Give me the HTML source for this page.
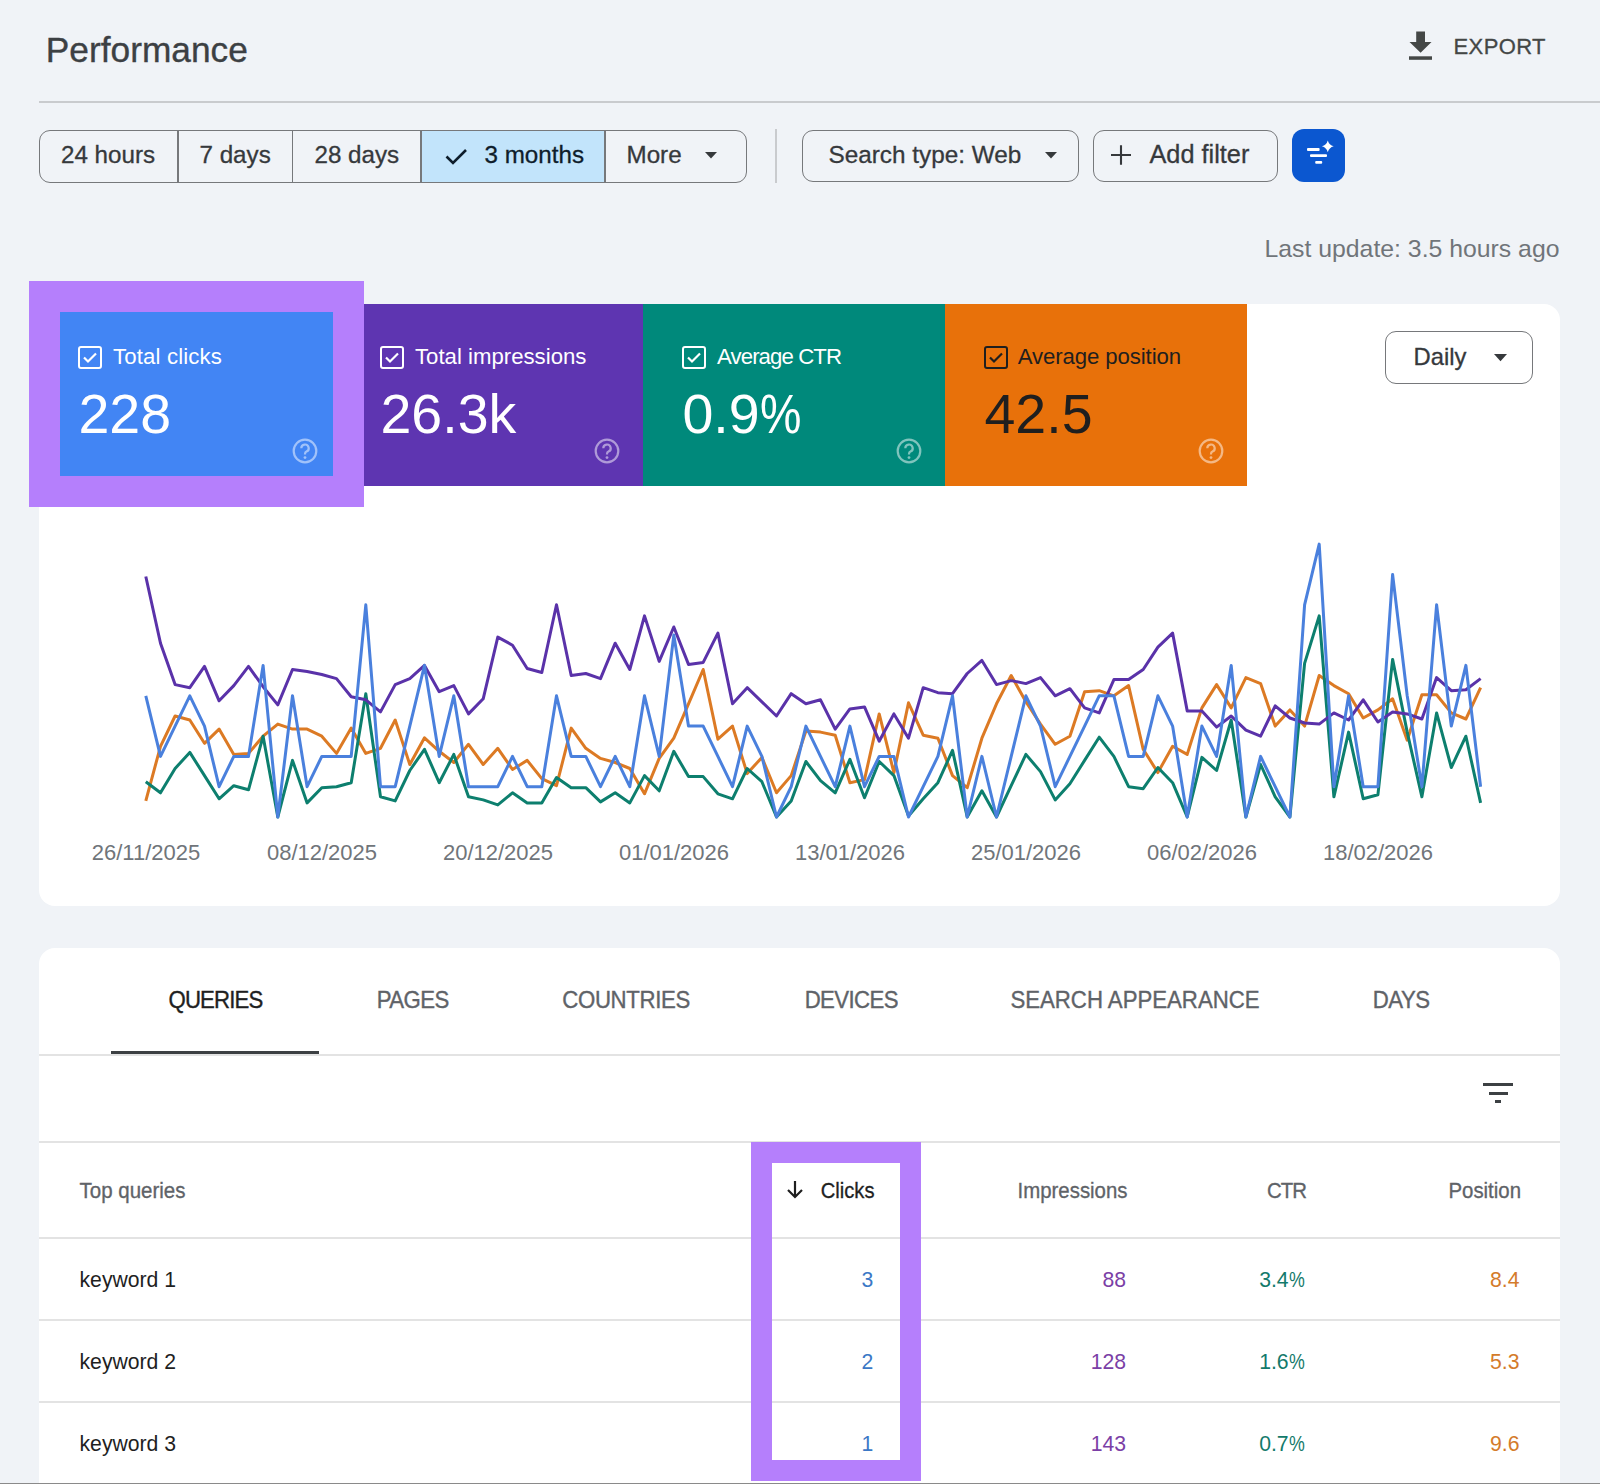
<!DOCTYPE html><html><head><meta charset="utf-8"><title>Performance</title><style>
*{box-sizing:border-box;margin:0;padding:0}
html,body{width:1600px;height:1484px;overflow:hidden}
body{background:#f0f3f7;font-family:"Liberation Sans",sans-serif;position:relative}
.t{position:absolute;line-height:1;white-space:nowrap}
.pc{display:inline-block;transform:scaleX(0.84);transform-origin:0 0}
</style></head><body>
<div class="t" style="left:45.80px;top:32.32px;font-size:35.3px;color:#3c4043;font-weight:400;-webkit-text-stroke:0.35px #3c4043;">Performance</div>
<svg style="position:absolute;left:1405px;top:28px" width="32" height="36" viewBox="0 0 32 36"><path d="M11.2 3.5h8.8v10.4h6.5L15.6 24.8 4.5 13.9h6.7z" fill="#444746"/><rect x="4" y="28.3" width="23" height="3.5" fill="#444746"/></svg>
<div class="t" style="left:1453.50px;top:36.38px;font-size:22px;color:#444746;font-weight:400;letter-spacing:0.4px;-webkit-text-stroke:0.3px #444746;">EXPORT</div>
<div style="position:absolute;left:39px;top:101px;width:1561px;height:2px;background:#c9cbce"></div>
<div style="position:absolute;left:39px;top:129.5px;width:708px;height:53px;border:1.75px solid #76787b;border-radius:11px;overflow:hidden"><div style="position:absolute;left:380.5px;top:0;width:184px;height:100%;background:#c2e4fb"></div></div>
<div style="position:absolute;left:177.25px;top:129.5px;width:1.5px;height:53.0px;background:#76787b"></div>
<div style="position:absolute;left:291.75px;top:129.5px;width:1.5px;height:53.0px;background:#76787b"></div>
<div style="position:absolute;left:420.25px;top:129.5px;width:1.5px;height:53.0px;background:#76787b"></div>
<div style="position:absolute;left:604.25px;top:129.5px;width:1.5px;height:53.0px;background:#76787b"></div>
<div class="t" style="left:61.00px;top:142.91px;font-size:24.2px;color:#36393c;font-weight:400;-webkit-text-stroke:0.3px #36393c;">24 hours</div>
<div class="t" style="left:199.50px;top:142.91px;font-size:24.2px;color:#36393c;font-weight:400;-webkit-text-stroke:0.3px #36393c;">7 days</div>
<div class="t" style="left:314.50px;top:142.91px;font-size:24.2px;color:#36393c;font-weight:400;-webkit-text-stroke:0.3px #36393c;">28 days</div>
<svg style="position:absolute;left:443px;top:145px" width="26" height="22" viewBox="0 0 26 22"><path d="M3.5 11.5l6.5 6.5L23 5" fill="none" stroke="#0e1d2b" stroke-width="2.6"/></svg>
<div class="t" style="left:484.50px;top:142.91px;font-size:24.2px;color:#0e1d2b;font-weight:400;-webkit-text-stroke:0.3px #0e1d2b;">3 months</div>
<div class="t" style="left:626.50px;top:142.91px;font-size:24.2px;color:#36393c;font-weight:400;-webkit-text-stroke:0.3px #36393c;">More</div>
<svg style="position:absolute;left:704.8px;top:152.3px" width="12" height="7" viewBox="0 0 12 7"><path d="M0 0h12L6 6.6z" fill="#36393c"/></svg>
<div style="position:absolute;left:775px;top:129px;width:2px;height:54px;background:#c9cbce"></div>
<div style="position:absolute;left:801.5px;top:129.5px;width:277.5px;height:52.5px;border:1.75px solid #76787b;border-radius:11px"></div>
<div class="t" style="left:828.50px;top:142.83px;font-size:24.3px;color:#36393c;font-weight:400;-webkit-text-stroke:0.3px #36393c;">Search type: Web</div>
<svg style="position:absolute;left:1044.8px;top:152.3px" width="12" height="7" viewBox="0 0 12 7"><path d="M0 0h12L6 6.6z" fill="#36393c"/></svg>
<div style="position:absolute;left:1092.5px;top:129.5px;width:185px;height:52.5px;border:1.75px solid #76787b;border-radius:11px"></div>
<svg style="position:absolute;left:1108.75px;top:143.2px" width="24" height="24" viewBox="0 0 24 24"><path d="M12 2.2v19.6M2 12h20" stroke="#36393c" stroke-width="2.1"/></svg>
<div class="t" style="left:1149.50px;top:141.98px;font-size:25.3px;color:#36393c;font-weight:400;-webkit-text-stroke:0.3px #36393c;">Add filter</div>
<div style="position:absolute;left:1292px;top:129px;width:53px;height:53px;background:#0b57d0;border-radius:12px"></div>
<svg style="position:absolute;left:1292px;top:129px" width="53" height="53" viewBox="1292 129 53 53"><rect x="1307" y="148" width="12.6" height="2.9" rx="1" fill="#fff"/><rect x="1310" y="154.2" width="17" height="2.8" rx="1" fill="#fff"/><rect x="1315.2" y="161" width="7" height="2.8" rx="1" fill="#fff"/><path d="M1327.8 140.4 Q1329.1 145 1333.7 146.3 Q1329.1 147.6 1327.8 152.2 Q1326.5 147.6 1321.9 146.3 Q1326.5 145 1327.8 140.4z" fill="#fff"/></svg>
<div class="t" style="right:40.50px;text-align:right;top:236.71px;font-size:24.8px;color:#70757a;font-weight:400;">Last update: 3.5 hours ago</div>
<div style="position:absolute;left:39px;top:304px;width:1521px;height:602px;background:#fff;border-radius:16px"></div>
<div style="position:absolute;left:39px;top:304px;width:302px;height:182px;background:#4285f4;border-top-left-radius:16px;"></div>
<div style="position:absolute;left:78px;top:346px;width:23.5px;height:23px;border:2px solid #fff;border-radius:3px"></div>
<svg style="position:absolute;left:78px;top:346px" width="24" height="23" viewBox="0 0 24 23"><path d="M6 11.5l4 4L18 7.5" fill="none" stroke="#fff" stroke-width="2.2"/></svg>
<div class="t" style="left:113.00px;top:345.51px;font-size:22.2px;color:#fff;font-weight:400;letter-spacing:0.15px;">Total clicks</div>
<div class="t" style="left:78.50px;top:386.82px;font-size:55.5px;color:#fff;font-weight:400;">228</div>
<svg style="position:absolute;left:291.2px;top:437px" width="28" height="28" viewBox="0 0 28 28"><circle cx="14" cy="14" r="11.3" fill="none" stroke="#fff" stroke-opacity="0.5" stroke-width="2.2"/><path d="M10.3 11.2a3.7 3.7 0 1 1 5.2 3.4c-1 .5-1.5 1.2-1.5 2.3v.6" fill="none" stroke="#fff" stroke-opacity="0.5" stroke-width="2.2"/><circle cx="14" cy="20.6" r="1.4" fill="#fff" fill-opacity="0.5"/></svg>
<div style="position:absolute;left:341px;top:304px;width:302px;height:182px;background:#5e35b1;"></div>
<div style="position:absolute;left:380px;top:346px;width:23.5px;height:23px;border:2px solid #fff;border-radius:3px"></div>
<svg style="position:absolute;left:380px;top:346px" width="24" height="23" viewBox="0 0 24 23"><path d="M6 11.5l4 4L18 7.5" fill="none" stroke="#fff" stroke-width="2.2"/></svg>
<div class="t" style="left:415.00px;top:345.51px;font-size:22.2px;color:#fff;font-weight:400;letter-spacing:0px;">Total impressions</div>
<div class="t" style="left:380.50px;top:386.82px;font-size:55.5px;color:#fff;font-weight:400;">26.3k</div>
<svg style="position:absolute;left:593.2px;top:437px" width="28" height="28" viewBox="0 0 28 28"><circle cx="14" cy="14" r="11.3" fill="none" stroke="#fff" stroke-opacity="0.5" stroke-width="2.2"/><path d="M10.3 11.2a3.7 3.7 0 1 1 5.2 3.4c-1 .5-1.5 1.2-1.5 2.3v.6" fill="none" stroke="#fff" stroke-opacity="0.5" stroke-width="2.2"/><circle cx="14" cy="20.6" r="1.4" fill="#fff" fill-opacity="0.5"/></svg>
<div style="position:absolute;left:643px;top:304px;width:302px;height:182px;background:#00897b;"></div>
<div style="position:absolute;left:682px;top:346px;width:23.5px;height:23px;border:2px solid #fff;border-radius:3px"></div>
<svg style="position:absolute;left:682px;top:346px" width="24" height="23" viewBox="0 0 24 23"><path d="M6 11.5l4 4L18 7.5" fill="none" stroke="#fff" stroke-width="2.2"/></svg>
<div class="t" style="left:717.00px;top:345.51px;font-size:22.2px;color:#fff;font-weight:400;letter-spacing:-0.9px;">Average CTR</div>
<div class="t" style="left:682.50px;top:386.82px;font-size:55.5px;color:#fff;font-weight:400;">0.9<span class=pc>%</span></div>
<svg style="position:absolute;left:895.2px;top:437px" width="28" height="28" viewBox="0 0 28 28"><circle cx="14" cy="14" r="11.3" fill="none" stroke="#fff" stroke-opacity="0.5" stroke-width="2.2"/><path d="M10.3 11.2a3.7 3.7 0 1 1 5.2 3.4c-1 .5-1.5 1.2-1.5 2.3v.6" fill="none" stroke="#fff" stroke-opacity="0.5" stroke-width="2.2"/><circle cx="14" cy="20.6" r="1.4" fill="#fff" fill-opacity="0.5"/></svg>
<div style="position:absolute;left:945px;top:304px;width:302px;height:182px;background:#e8710a;"></div>
<div style="position:absolute;left:984px;top:346px;width:23.5px;height:23px;border:2px solid #1f1f1f;border-radius:3px"></div>
<svg style="position:absolute;left:984px;top:346px" width="24" height="23" viewBox="0 0 24 23"><path d="M6 11.5l4 4L18 7.5" fill="none" stroke="#1f1f1f" stroke-width="2.2"/></svg>
<div class="t" style="left:1017.70px;top:345.51px;font-size:22.2px;color:#1f1f1f;font-weight:400;letter-spacing:-0.1px;">Average position</div>
<div class="t" style="left:984.50px;top:386.82px;font-size:55.5px;color:#1f1f1f;font-weight:400;">42.5</div>
<svg style="position:absolute;left:1197.2px;top:437px" width="28" height="28" viewBox="0 0 28 28"><circle cx="14" cy="14" r="11.3" fill="none" stroke="#fff" stroke-opacity="0.5" stroke-width="2.2"/><path d="M10.3 11.2a3.7 3.7 0 1 1 5.2 3.4c-1 .5-1.5 1.2-1.5 2.3v.6" fill="none" stroke="#fff" stroke-opacity="0.5" stroke-width="2.2"/><circle cx="14" cy="20.6" r="1.4" fill="#fff" fill-opacity="0.5"/></svg>
<div style="position:absolute;left:29.3px;top:280.8px;width:334.7px;height:226.7px;border-style:solid;border-color:#b57ffc;border-width:31.3px 31.8px 31.3px 31.8px"></div>
<div style="position:absolute;left:1385px;top:331px;width:148px;height:52.5px;border:1.75px solid #76787b;border-radius:11px"></div>
<div class="t" style="left:1413.50px;top:344.55px;font-size:23.8px;color:#36393c;font-weight:400;-webkit-text-stroke:0.3px #36393c;">Daily</div>
<svg style="position:absolute;left:1493.8px;top:354px" width="13" height="8" viewBox="0 0 13 8"><path d="M0 0h13L6.5 7.2z" fill="#36393c"/></svg>
<svg style="position:absolute;left:0;top:0" width="1600" height="1484" viewBox="0 0 1600 1484"><polyline points="145.8,800.9 160.5,746.3 175.1,716.0 189.8,720.0 204.5,743.3 219.1,729.1 233.8,754.4 248.5,753.4 263.1,736.2 277.8,724.1 292.5,729.1 307.1,729.1 321.8,736.2 336.5,753.4 351.2,728.1 365.8,753.4 380.5,748.3 395.2,720.0 409.8,764.5 424.5,737.8 439.2,751.3 453.8,762.5 468.5,744.3 483.2,764.5 497.8,748.3 512.5,769.5 527.2,760.4 541.8,778.6 556.5,785.7 571.2,728.1 585.8,748.3 600.5,758.4 615.2,762.5 629.8,768.5 644.5,793.8 659.2,758.4 673.8,738.2 688.5,703.8 703.2,669.5 717.9,739.2 732.5,726.1 747.2,773.6 761.9,757.4 776.5,792.8 791.2,775.6 805.9,731.1 820.5,732.1 835.2,735.2 849.9,782.7 864.5,779.6 879.2,713.9 893.9,772.6 908.5,702.8 923.2,735.2 937.9,738.2 952.5,775.6 967.2,787.7 981.9,738.2 996.5,703.8 1011.2,675.5 1025.9,701.8 1040.5,724.1 1055.2,744.3 1069.9,736.2 1084.6,691.7 1099.2,690.7 1113.9,695.8 1128.6,685.6 1143.2,749.3 1157.9,772.6 1172.6,746.3 1187.2,754.4 1201.9,707.9 1216.6,684.6 1231.2,707.9 1245.9,677.6 1260.6,683.6 1275.2,726.1 1289.9,709.9 1304.6,726.1 1319.2,675.5 1333.9,685.6 1348.6,693.7 1363.2,718.0 1377.9,709.9 1392.6,698.8 1407.2,740.2 1421.9,694.7 1436.6,694.7 1451.3,712.9 1465.9,719.0 1480.6,687.7" fill="none" stroke="#dc7a24" stroke-width="3" stroke-linejoin="round"/><polyline points="145.8,781.7 160.5,792.8 175.1,768.5 189.8,752.4 204.5,775.6 219.1,798.8 233.8,785.7 248.5,789.8 263.1,736.2 277.8,817.0 292.5,760.4 307.1,802.9 321.8,787.7 336.5,786.7 351.2,782.7 365.8,693.7 380.5,796.8 395.2,800.9 409.8,770.5 424.5,749.3 439.2,782.7 453.8,754.4 468.5,796.8 483.2,799.9 497.8,804.9 512.5,792.8 527.2,802.9 541.8,802.9 556.5,777.6 571.2,787.7 585.8,787.7 600.5,801.9 615.2,792.8 629.8,802.9 644.5,775.6 659.2,790.8 673.8,751.3 688.5,776.6 703.2,776.6 717.9,793.8 732.5,798.8 747.2,768.5 761.9,781.7 776.5,817.0 791.2,800.9 805.9,761.5 820.5,780.7 835.2,792.8 849.9,759.4 864.5,797.8 879.2,761.5 893.9,775.6 908.5,816.0 923.2,798.8 937.9,782.7 952.5,750.3 967.2,817.0 981.9,790.8 996.5,817.0 1011.2,785.7 1025.9,754.4 1040.5,771.6 1055.2,799.9 1069.9,783.7 1084.6,760.4 1099.2,737.2 1113.9,756.4 1128.6,786.7 1143.2,788.7 1157.9,767.5 1172.6,782.7 1187.2,817.0 1201.9,757.4 1216.6,770.5 1231.2,720.0 1245.9,817.0 1260.6,764.5 1275.2,796.8 1289.9,817.0 1304.6,663.4 1319.2,615.9 1333.9,796.8 1348.6,732.1 1363.2,798.8 1377.9,794.8 1392.6,659.4 1407.2,732.1 1421.9,796.8 1436.6,712.9 1451.3,767.5 1465.9,736.2 1480.6,802.9" fill="none" stroke="#0d7f6e" stroke-width="3" stroke-linejoin="round"/><polyline points="145.8,576.5 160.5,643.2 175.1,684.6 189.8,687.7 204.5,666.4 219.1,700.8 233.8,685.6 248.5,666.4 263.1,686.7 277.8,704.9 292.5,669.5 307.1,671.5 321.8,674.5 336.5,678.6 351.2,696.8 365.8,699.8 380.5,711.9 395.2,684.6 409.8,678.6 424.5,665.4 439.2,691.7 453.8,685.6 468.5,713.9 483.2,698.8 497.8,637.1 512.5,645.2 527.2,668.5 541.8,672.5 556.5,604.8 571.2,675.5 585.8,673.5 600.5,678.6 615.2,643.2 629.8,669.5 644.5,615.9 659.2,661.4 673.8,627.0 688.5,664.4 703.2,662.4 717.9,633.1 732.5,703.8 747.2,687.7 761.9,701.8 776.5,716.0 791.2,693.7 805.9,703.8 820.5,699.8 835.2,729.1 849.9,708.9 864.5,706.9 879.2,741.2 893.9,713.9 908.5,738.2 923.2,687.7 937.9,692.7 952.5,693.7 967.2,673.5 981.9,660.4 996.5,684.6 1011.2,680.6 1025.9,683.6 1040.5,677.6 1055.2,695.8 1069.9,688.7 1084.6,707.9 1099.2,712.9 1113.9,679.6 1128.6,679.6 1143.2,669.5 1157.9,647.2 1172.6,633.1 1187.2,710.9 1201.9,710.9 1216.6,727.1 1231.2,716.0 1245.9,730.1 1260.6,736.2 1275.2,705.9 1289.9,718.0 1304.6,723.0 1319.2,724.1 1333.9,712.9 1348.6,720.0 1363.2,699.8 1377.9,722.0 1392.6,711.9 1407.2,713.9 1421.9,719.0 1436.6,677.6 1451.3,690.7 1465.9,689.7 1480.6,678.6" fill="none" stroke="#5a32a9" stroke-width="3" stroke-linejoin="round"/><polyline points="145.8,695.8 160.5,756.4 175.1,726.1 189.8,695.8 204.5,726.1 219.1,786.7 233.8,756.4 248.5,756.4 263.1,665.4 277.8,817.0 292.5,695.8 307.1,786.7 321.8,756.4 336.5,756.4 351.2,756.4 365.8,604.8 380.5,786.7 395.2,786.7 409.8,726.1 424.5,665.4 439.2,756.4 453.8,695.8 468.5,786.7 483.2,786.7 497.8,786.7 512.5,756.4 527.2,786.7 541.8,786.7 556.5,695.8 571.2,756.4 585.8,756.4 600.5,786.7 615.2,756.4 629.8,786.7 644.5,695.8 659.2,756.4 673.8,635.1 688.5,726.1 703.2,726.1 717.9,756.4 732.5,786.7 747.2,726.1 761.9,756.4 776.5,817.0 791.2,786.7 805.9,726.1 820.5,756.4 835.2,786.7 849.9,726.1 864.5,786.7 879.2,756.4 893.9,756.4 908.5,817.0 923.2,786.7 937.9,756.4 952.5,695.8 967.2,817.0 981.9,756.4 996.5,817.0 1011.2,756.4 1025.9,695.8 1040.5,726.1 1055.2,786.7 1069.9,756.4 1084.6,726.1 1099.2,695.8 1113.9,695.8 1128.6,756.4 1143.2,756.4 1157.9,695.8 1172.6,726.1 1187.2,817.0 1201.9,726.1 1216.6,756.4 1231.2,665.4 1245.9,817.0 1260.6,756.4 1275.2,786.7 1289.9,817.0 1304.6,604.8 1319.2,544.1 1333.9,786.7 1348.6,695.8 1363.2,786.7 1377.9,786.7 1392.6,574.5 1407.2,695.8 1421.9,786.7 1436.6,604.8 1451.3,726.1 1465.9,665.4 1480.6,786.7" fill="none" stroke="#4a80dd" stroke-width="3" stroke-linejoin="round"/></svg>
<div class="t" style="left:-154.00px;width:600px;text-align:center;top:841.88px;font-size:22px;color:#70757a;font-weight:400;">26/11/2025</div>
<div class="t" style="left:22.00px;width:600px;text-align:center;top:841.88px;font-size:22px;color:#70757a;font-weight:400;">08/12/2025</div>
<div class="t" style="left:198.00px;width:600px;text-align:center;top:841.88px;font-size:22px;color:#70757a;font-weight:400;">20/12/2025</div>
<div class="t" style="left:374.00px;width:600px;text-align:center;top:841.88px;font-size:22px;color:#70757a;font-weight:400;">01/01/2026</div>
<div class="t" style="left:550.00px;width:600px;text-align:center;top:841.88px;font-size:22px;color:#70757a;font-weight:400;">13/01/2026</div>
<div class="t" style="left:726.00px;width:600px;text-align:center;top:841.88px;font-size:22px;color:#70757a;font-weight:400;">25/01/2026</div>
<div class="t" style="left:902.00px;width:600px;text-align:center;top:841.88px;font-size:22px;color:#70757a;font-weight:400;">06/02/2026</div>
<div class="t" style="left:1078.00px;width:600px;text-align:center;top:841.88px;font-size:22px;color:#70757a;font-weight:400;">18/02/2026</div>
<div style="position:absolute;left:39px;top:947.5px;width:1521px;height:600px;background:#fff;border-radius:16px"></div>
<div class="t" style="left:-84.56px;width:600px;text-align:center;top:990.21px;font-size:22.2px;color:#1f1f1f;font-weight:400;letter-spacing:-0.88px;-webkit-text-stroke:0.35px #1f1f1f;transform:scaleY(1.1);transform-origin:0 18.79px;">QUERIES</div>
<div class="t" style="left:112.77px;width:600px;text-align:center;top:990.21px;font-size:22.2px;color:#5f6368;font-weight:400;letter-spacing:-0.55px;-webkit-text-stroke:0.35px #5f6368;transform:scaleY(1.1);transform-origin:0 18.79px;">PAGES</div>
<div class="t" style="left:326.16px;width:600px;text-align:center;top:990.21px;font-size:22.2px;color:#5f6368;font-weight:400;letter-spacing:-0.33px;-webkit-text-stroke:0.35px #5f6368;transform:scaleY(1.1);transform-origin:0 18.79px;">COUNTRIES</div>
<div class="t" style="left:551.30px;width:600px;text-align:center;top:990.21px;font-size:22.2px;color:#5f6368;font-weight:400;letter-spacing:-0.6px;-webkit-text-stroke:0.35px #5f6368;transform:scaleY(1.1);transform-origin:0 18.79px;">DEVICES</div>
<div class="t" style="left:835.00px;width:600px;text-align:center;top:990.21px;font-size:22.2px;color:#5f6368;font-weight:400;letter-spacing:0px;-webkit-text-stroke:0.35px #5f6368;transform:scaleY(1.1);transform-origin:0 18.79px;">SEARCH APPEARANCE</div>
<div class="t" style="left:1101.21px;width:600px;text-align:center;top:990.21px;font-size:22.2px;color:#5f6368;font-weight:400;letter-spacing:-0.43px;-webkit-text-stroke:0.35px #5f6368;transform:scaleY(1.1);transform-origin:0 18.79px;">DAYS</div>
<div style="position:absolute;left:111px;top:1050.5px;width:208px;height:3.0px;background:#3c4043"></div>
<div style="position:absolute;left:39px;top:1053.5px;width:1521px;height:2.0px;background:#e3e3e3"></div>
<div style="position:absolute;left:1483.3px;top:1083.2px;width:29.90000000000009px;height:3.099999999999909px;background:#3c4043"></div>
<div style="position:absolute;left:1488.6px;top:1091.8px;width:19.5px;height:3.0px;background:#3c4043"></div>
<div style="position:absolute;left:1495px;top:1100px;width:6.2000000000000455px;height:3px;background:#3c4043"></div>
<div style="position:absolute;left:39px;top:1141px;width:1521px;height:2px;background:#e3e3e3"></div>
<div style="position:absolute;left:39px;top:1236.5px;width:1521px;height:2.0px;background:#e3e3e3"></div>
<div style="position:absolute;left:39px;top:1319px;width:1521px;height:2px;background:#e3e3e3"></div>
<div style="position:absolute;left:39px;top:1400.5px;width:1521px;height:2.0px;background:#e3e3e3"></div>
<div class="t" style="left:79.50px;top:1181.15px;font-size:20.5px;color:#5f6368;font-weight:400;-webkit-text-stroke:0.3px #5f6368;transform:scaleY(1.1);transform-origin:0 17.35px;">Top queries</div>
<svg style="position:absolute;left:784px;top:1178px" width="22" height="22" viewBox="0 0 22 22"><path d="M11 3v16M4 12l7 7 7-7" fill="none" stroke="#1f1f1f" stroke-width="2.2"/></svg>
<div class="t" style="right:725.50px;text-align:right;top:1180.90px;font-size:20.2px;color:#1f1f1f;font-weight:400;-webkit-text-stroke:0.3px #1f1f1f;transform:scaleY(1.1);transform-origin:0 17.10px;">Clicks</div>
<div class="t" style="right:472.50px;text-align:right;top:1181.23px;font-size:20.4px;color:#5f6368;font-weight:400;-webkit-text-stroke:0.3px #5f6368;transform:scaleY(1.1);transform-origin:0 17.27px;">Impressions</div>
<div class="t" style="right:294.00px;text-align:right;top:1181.23px;font-size:20.4px;color:#5f6368;font-weight:400;letter-spacing:-1px;-webkit-text-stroke:0.3px #5f6368;transform:scaleY(1.1);transform-origin:0 17.27px;">CTR</div>
<div class="t" style="right:79.00px;text-align:right;top:1181.23px;font-size:20.4px;color:#5f6368;font-weight:400;-webkit-text-stroke:0.3px #5f6368;transform:scaleY(1.1);transform-origin:0 17.27px;">Position</div>
<div class="t" style="left:79.50px;top:1269.05px;font-size:21.2px;color:#1f1f1f;font-weight:400;">keyword 1</div>
<div class="t" style="right:726.70px;text-align:right;top:1269.05px;font-size:21.2px;color:#3b78c6;font-weight:400;">3</div>
<div class="t" style="right:474.00px;text-align:right;top:1269.05px;font-size:21.2px;color:#7b3fa6;font-weight:400;">88</div>
<div class="t" style="right:295.50px;text-align:right;top:1269.05px;font-size:21.2px;color:#137a6b;font-weight:400;">3.4<span class=pc style=margin-right:-3px>%</span></div>
<div class="t" style="right:80.50px;text-align:right;top:1269.05px;font-size:21.2px;color:#d47b2a;font-weight:400;">8.4</div>
<div class="t" style="left:79.50px;top:1351.05px;font-size:21.2px;color:#1f1f1f;font-weight:400;">keyword 2</div>
<div class="t" style="right:726.70px;text-align:right;top:1351.05px;font-size:21.2px;color:#3b78c6;font-weight:400;">2</div>
<div class="t" style="right:474.00px;text-align:right;top:1351.05px;font-size:21.2px;color:#7b3fa6;font-weight:400;">128</div>
<div class="t" style="right:295.50px;text-align:right;top:1351.05px;font-size:21.2px;color:#137a6b;font-weight:400;">1.6<span class=pc style=margin-right:-3px>%</span></div>
<div class="t" style="right:80.50px;text-align:right;top:1351.05px;font-size:21.2px;color:#d47b2a;font-weight:400;">5.3</div>
<div class="t" style="left:79.50px;top:1433.05px;font-size:21.2px;color:#1f1f1f;font-weight:400;">keyword 3</div>
<div class="t" style="right:726.70px;text-align:right;top:1433.05px;font-size:21.2px;color:#3b78c6;font-weight:400;">1</div>
<div class="t" style="right:474.00px;text-align:right;top:1433.05px;font-size:21.2px;color:#7b3fa6;font-weight:400;">143</div>
<div class="t" style="right:295.50px;text-align:right;top:1433.05px;font-size:21.2px;color:#137a6b;font-weight:400;">0.7<span class=pc style=margin-right:-3px>%</span></div>
<div class="t" style="right:80.50px;text-align:right;top:1433.05px;font-size:21.2px;color:#d47b2a;font-weight:400;">9.6</div>
<div style="position:absolute;left:751px;top:1142px;width:170px;height:338.5px;border:21px solid #b57ffc"></div>
<div style="position:absolute;left:0px;top:1482.5px;width:1600px;height:1.5px;background:#8a8a8a"></div>
</body></html>
